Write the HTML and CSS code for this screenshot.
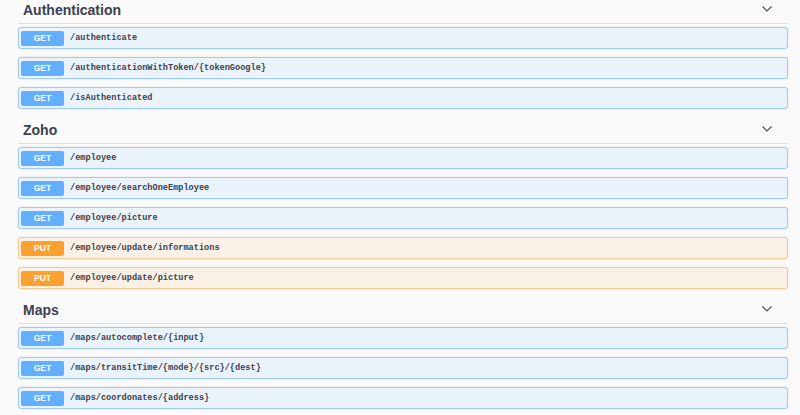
FILE: index.html
```html
<!DOCTYPE html>
<html>
<head>
    <meta charset="UTF-8">
    <title>API</title>
    <link rel="stylesheet" href="styles.css">
</head>
<body>
<div class="wrap">
    <section class="tag">
        <h4 class="tag-head"><span>Authentication</span><svg class="arrow" width="10" height="6" viewBox="0 0 10 6"><path d="M0.5 0.5 L5 5 L9.5 0.5" fill="none" stroke="#555" stroke-width="1.2"/></svg></h4>
        <div class="op get"><span class="method">GET</span><span class="path">/authenticate</span></div>
        <div class="op get"><span class="method">GET</span><span class="path">/authenticationWithToken/{tokenGoogle}</span></div>
        <div class="op get"><span class="method">GET</span><span class="path">/isAuthenticated</span></div>
    </section>
    <section class="tag">
        <h4 class="tag-head"><span>Zoho</span><svg class="arrow" width="10" height="6" viewBox="0 0 10 6"><path d="M0.5 0.5 L5 5 L9.5 0.5" fill="none" stroke="#555" stroke-width="1.2"/></svg></h4>
        <div class="op get"><span class="method">GET</span><span class="path">/employee</span></div>
        <div class="op get"><span class="method">GET</span><span class="path">/employee/searchOneEmployee</span></div>
        <div class="op get"><span class="method">GET</span><span class="path">/employee/picture</span></div>
        <div class="op put"><span class="method">PUT</span><span class="path">/employee/update/informations</span></div>
        <div class="op put"><span class="method">PUT</span><span class="path">/employee/update/picture</span></div>
    </section>
    <section class="tag">
        <h4 class="tag-head"><span>Maps</span><svg class="arrow" width="10" height="6" viewBox="0 0 10 6"><path d="M0.5 0.5 L5 5 L9.5 0.5" fill="none" stroke="#555" stroke-width="1.2"/></svg></h4>
        <div class="op get"><span class="method">GET</span><span class="path">/maps/autocomplete/{input}</span></div>
        <div class="op get"><span class="method">GET</span><span class="path">/maps/transitTime/{mode}/{src}/{dest}</span></div>
        <div class="op get"><span class="method">GET</span><span class="path">/maps/coordonates/{address}</span></div>
    </section>
</div>
</body>
</html>
```
FILE: styles.css
```css
*{margin:0;padding:0;box-sizing:border-box;}
html,body{background:#fafafa;}
body{font-family:"Liberation Sans",Arial,sans-serif;color:#3b4151;overflow:hidden;}
.wrap{padding:0 12px 0 18px;margin-top:-3px;}
.tag-head{display:flex;align-items:center;justify-content:space-between;height:27px;line-height:26px;padding-left:5px;padding-right:16px;font-size:14px;font-weight:bold;color:#3b4151;border-bottom:1px solid #dcdde0;margin-bottom:3px;}
.tag-head .arrow{margin-bottom:3px;}
.op{display:flex;align-items:center;height:22px;padding:0 2px;margin-bottom:8px;border:1px solid;border-radius:3px;box-shadow:0 0 2px rgba(0,0,0,.12);}
.op.get{background:#ebf3fa;border-color:#9fcaf7;}
.op.put{background:#faf1e6;border-color:#f8c98c;}
.method{display:block;width:43px;height:15px;line-height:15px;border-radius:2px;text-align:center;color:#fff;font-size:8.5px;font-weight:bold;}
.get .method{background:#61affe;}
.put .method{background:#fca130;}
.path{padding-left:6px;font-family:"Liberation Mono","Courier New",monospace;font-weight:bold;font-size:8.6px;color:#3b4151;}
```
